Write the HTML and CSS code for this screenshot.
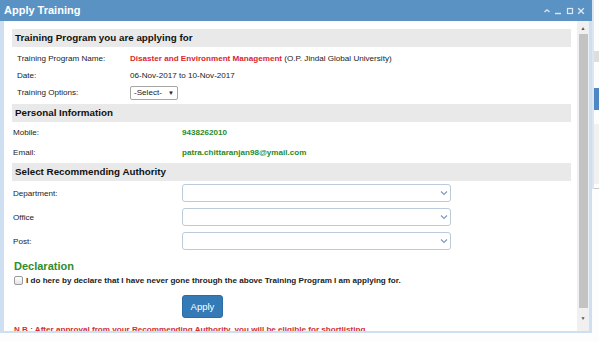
FILE: index.html
```html
<!DOCTYPE html>
<html lang="en">
<head>
    <meta charset="UTF-8">
    <title>Apply Training</title>
    <link rel="stylesheet" href="styles.css">
</head>
<body>

    <div class="dialog">
        <div class="titlebar">
            <span class="title">Apply Training</span>
            <div class="tools">
                <svg width="8" height="8" viewBox="0 0 8 8"><polyline points="1.5,5 4,2.8 6.5,5" fill="none" stroke="#dde8f4" stroke-width="1.3"/></svg>
                <svg width="8" height="8" viewBox="0 0 8 8"><line x1="1" y1="6.5" x2="7" y2="6.5" stroke="#dde8f4" stroke-width="1.4"/></svg>
                <svg width="8" height="8" viewBox="0 0 8 8"><rect x="1.5" y="1.5" width="5" height="5" fill="none" stroke="#dde8f4" stroke-width="1.2"/></svg>
                <svg width="8" height="8" viewBox="0 0 8 8"><path d="M1.2 1.2 L6.8 6.8 M6.8 1.2 L1.2 6.8" stroke="#dde8f4" stroke-width="1.4"/></svg>
            </div>
        </div>
        <div class="frame">
            <div class="pane">
                <div class="sec-head">Training Program you are applying for</div>
                <div class="prog-rows">
                    <div class="row"><span class="lbl">Training Program Name:</span><span><b class="red">Disaster and Environment Management</b> (O.P. Jindal Global University)</span></div>
                    <div class="row"><span class="lbl">Date:</span><span>06-Nov-2017 to 10-Nov-2017</span></div>
                    <div class="row"><span class="lbl">Training Options:</span><span class="mini-select">-Select- <i>&#9660;</i></span></div>
                </div>

                <div class="sec-head">Personal Information</div>
                <div class="info-rows">
                    <div class="row"><span class="lbl">Mobile:</span><b class="green">9438262010</b></div>
                    <div class="row"><span class="lbl">Email:</span><b class="green">patra.chittaranjan98@ymail.com</b></div>
                </div>

                <div class="sec-head">Select Recommending Authority</div>
                <div class="auth-rows">
                    <div class="row"><span class="lbl">Department:</span><span class="combo"><svg width="8" height="6" viewBox="0 0 8 6"><polyline points="1,1.5 4,4.5 7,1.5" fill="none" stroke="#7d9bbd" stroke-width="1.2"/></svg></span></div>
                    <div class="row"><span class="lbl">Office</span><span class="combo"><svg width="8" height="6" viewBox="0 0 8 6"><polyline points="1,1.5 4,4.5 7,1.5" fill="none" stroke="#7d9bbd" stroke-width="1.2"/></svg></span></div>
                    <div class="row"><span class="lbl">Post:</span><span class="combo"><svg width="8" height="6" viewBox="0 0 8 6"><polyline points="1,1.5 4,4.5 7,1.5" fill="none" stroke="#7d9bbd" stroke-width="1.2"/></svg></span></div>
                </div>

                <h3 class="decl-title">Declaration</h3>
                <label class="decl"><span class="check"></span>I do here by declare that I have never gone through the above Training Program I am applying for.</label>
                <button class="apply-btn">Apply</button>
                <p class="note">N.B.: After approval from your Recommending Authority, you will be eligible for shortlisting</p>
            </div>
            <div class="scrollbar">
                <span class="arrow">&#9650;</span>
                <span class="thumb"></span>
                <span class="arrow">&#9660;</span>
            </div>
        </div>
    </div>

    <div class="page-edge">
        <span class="edge-gray"></span>
        <span class="edge-blue"></span>
        <span class="edge-light"></span>
        <span class="edge-line"></span>
    </div>

</body>
</html>
```

FILE: styles.css
```css
body{
    margin: 0;
    height: 342px;
    display: flex;
    align-items: flex-start;
    background: #fdfdfd;
    font-family: "Liberation Sans", Arial, sans-serif;
    font-size: 8.1px;
    color: #222;
    overflow: hidden;
}
.dialog{
    width: 592px;
    height: 333px;
    display: flex;
    flex-direction: column;
    flex-shrink: 0;
}
.titlebar{
    height: 21px;
    background: #5b92c4;
    display: flex;
    align-items: center;
    justify-content: space-between;
    padding: 0 7px 0 4px;
}
.title{
    color: #fff;
    font-size: 11px;
    font-weight: bold;
    margin-top: -2px;
}
.tools{
    display: flex;
    gap: 3.5px;
    margin-top: 1px;
}
.frame{
    flex: 1;
    display: flex;
    border: 3px solid #cddff1;
    border-top: 0;
    border-bottom-width: 2px;
    border-left-width: 4px;
    min-height: 0;
}
.pane{
    flex: 1;
    background: #fff;
    padding: 8px 6px 0 8px;
    overflow: hidden;
}
.sec-head{
    height: 18px;
    line-height: 18px;
    background: #e9e9e9;
    padding-left: 3px;
    font-size: 9.8px;
    font-weight: bold;
    color: #111;
}
.row{
    display: flex;
    align-items: center;
}
.prog-rows{
    padding: 3px 0 3px 5px;
}
.prog-rows .row{
    height: 17px;
}
.prog-rows .lbl{
    width: 113px;
}
.info-rows .row{
    height: 20px;
    padding-left: 1px;
}
.info-rows{
    margin-bottom: 1px;
}
.info-rows .lbl, .auth-rows .lbl{
    width: 169px;
}
.auth-rows .row{
    height: 24px;
    padding-left: 1px;
}
.red{
    color: #d9262f;
}
.green{
    color: #2a8a2a;
}
.mini-select{
    display: flex;
    align-items: center;
    justify-content: space-between;
    width: 40px;
    height: 12px;
    padding: 0 3px;
    border: 1px solid #a6a6a6;
    border-radius: 2px;
    background: #fff;
}
.mini-select i{
    font-style: normal;
    font-size: 6px;
}
.combo{
    width: 265px;
    height: 16px;
    border: 1px solid #bccbda;
    border-radius: 3px;
    display: flex;
    align-items: center;
    justify-content: flex-end;
    padding-right: 2px;
    background: #fff;
}
.decl-title{
    margin: 6px 0 0 2px;
    font-size: 11px;
    line-height: 14px;
    color: #2f8c2f;
}
.decl{
    display: flex;
    align-items: center;
    gap: 3px;
    height: 12px;
    margin: 1px 0 0 2px;
    font-weight: bold;
}
.check{
    width: 7px;
    height: 7px;
    border: 1px solid #9a9a9a;
    border-radius: 2px;
    background: linear-gradient(#fff, #e4e4e4);
}
.apply-btn{
    display: block;
    margin: 9px 0 0 170px;
    width: 41px;
    height: 23px;
    border: 1px solid #2e6da4;
    border-radius: 3px;
    background: #337ab7;
    color: #fff;
    font-family: "Liberation Sans", Arial, sans-serif;
    font-size: 9.5px;
    padding: 0;
}
.note{
    margin: 7px 0 0 2px;
    line-height: 10px;
    font-weight: bold;
    color: #cf2f34;
    white-space: nowrap;
}
.scrollbar{
    width: 12px;
    background: #f0f0f0;
    display: flex;
    flex-direction: column;
    align-items: center;
    padding-top: 3px;
}
.scrollbar .arrow{
    font-size: 5px;
    line-height: 8px;
    color: #555;
}
.thumb{
    width: 9px;
    height: 274px;
    margin: 2px 0 6px;
    background: #c3c3c3;
}
.page-edge{
    flex: 1;
    display: flex;
    flex-direction: column;
    border-left: 2px solid #dbe6f2;
    padding-top: 51px;
}
.page-edge span{
    display: block;
}
.edge-gray{
    height: 11px;
    background: #dedede;
}
.edge-blue{
    height: 22px;
    margin-top: 26px;
    background: #4f87c4;
}
.edge-light{
    height: 60px;
    margin-top: 14px;
    background: #f1f1f1;
}
.edge-line{
    height: 1px;
    margin-top: 4px;
    background: #c9c9c9;
}
```
